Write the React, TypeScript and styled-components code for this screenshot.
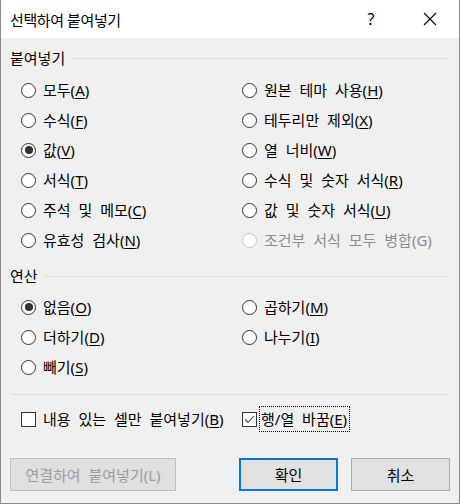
import styled, { createGlobalStyle } from "styled-components"

const GlobalStyle = createGlobalStyle`
  html, body {
    margin: 0;
    padding: 0;
    background: #f0f0f0;
  }
  * {
    box-sizing: border-box;
  }
`

type Item = {
  label: string
  key: string
  checked?: boolean
  disabled?: boolean
}

const pasteItems: Item[] = [
  { label: "모두", key: "A" },
  { label: "원본 테마 사용", key: "H" },
  { label: "수식", key: "F" },
  { label: "테두리만 제외", key: "X" },
  { label: "값", key: "V", checked: true },
  { label: "열 너비", key: "W" },
  { label: "서식", key: "T" },
  { label: "수식 및 숫자 서식", key: "R" },
  { label: "주석 및 메모", key: "C" },
  { label: "값 및 숫자 서식", key: "U" },
  { label: "유효성 검사", key: "N" },
  { label: "조건부 서식 모두 병합", key: "G", disabled: true },
]

const opItems: Item[] = [
  { label: "없음", key: "O", checked: true },
  { label: "곱하기", key: "M" },
  { label: "더하기", key: "D" },
  { label: "나누기", key: "I" },
  { label: "빼기", key: "S" },
]

const Label = ({ item }: { item: Item }) => (
  <LabelText $disabled={item.disabled}>
    {item.label}(
    {item.disabled ? item.key : <u>{item.key}</u>})
  </LabelText>
)

const App = () => {
  return (
    <>
      <GlobalStyle />
      <Dialog>
        <TitleBar>
          <Title>선택하여 붙여넣기</Title>
          <TitleButtons>
            <HelpMark>?</HelpMark>
            <CloseIcon width="14" height="14" viewBox="0 0 14 14">
              <path d="M1 1 L13 13 M13 1 L1 13" stroke="#000" strokeWidth="1.1" fill="none" />
            </CloseIcon>
          </TitleButtons>
        </TitleBar>
        <Body>
          <GroupHeader>
            <span>붙여넣기</span>
            <Rule />
          </GroupHeader>
          <OptionGrid>
            {pasteItems.map((it) => (
              <Option key={it.key}>
                <Radio $checked={it.checked} $disabled={it.disabled} />
                <Label item={it} />
              </Option>
            ))}
          </OptionGrid>

          <GroupHeader $gap={11}>
            <span>연산</span>
            <Rule />
          </GroupHeader>
          <OptionGrid $top={6}>
            {opItems.map((it) => (
              <Option key={it.key}>
                <Radio $checked={it.checked} />
                <Label item={it} />
              </Option>
            ))}
          </OptionGrid>

          <Separator />

          <CheckRow>
            <Option>
              <CheckBox />
              <Label item={{ label: "내용 있는 셀만 붙여넣기", key: "B" }} />
            </Option>
            <Option>
              <CheckBox>
                <svg width="13" height="13" viewBox="0 0 13 13">
                  <path d="M2 6.5 L5 9.5 L11 3" stroke="#444" strokeWidth="1.1" fill="none" />
                </svg>
              </CheckBox>
              <FocusBox>
                <Label item={{ label: "행/열 바꿈", key: "E" }} />
              </FocusBox>
            </Option>
          </CheckRow>

          <ButtonRow>
            <Button $variant="disabled" $width={166}>연결하여 붙여넣기(L)</Button>
            <Spacer />
            <Button $variant="default" $width={99}>확인</Button>
            <Button $variant="normal" $width={99}>취소</Button>
          </ButtonRow>
        </Body>
      </Dialog>
    </>
  )
}

const Dialog = styled.div`
  width: 460px;
  height: 504px;
  overflow: hidden;
  display: flex;
  flex-direction: column;
  background: #f0f0f0;
  border-left: 1px solid #8c8c8c;
  border-right: 1px solid #8c8c8c;
  border-bottom: 1px solid #8c8c8c;
  font-family: "Noto Sans", "Noto Sans CJK KR", sans-serif;
  font-size: 15px;
  color: #000;
`

const TitleBar = styled.div`
  height: 38px;
  flex-shrink: 0;
  background: #fff;
  display: flex;
  align-items: center;
  padding-left: 9px;
`

const Title = styled.div`
  flex: 1;
  font-size: 15px;
  line-height: 20px;
  letter-spacing: -0.4px;
  padding-top: 2px;
`

const TitleButtons = styled.div`
  display: flex;
  align-items: center;
`

const HelpMark = styled.span`
  width: 20px;
  text-align: center;
  font-size: 16px;
  margin-right: 42px;
`

const CloseIcon = styled.svg`
  margin-right: 22px;
`

const Body = styled.div`
  flex: 1;
  padding: 10px 9px 0 9px;
  display: flex;
  flex-direction: column;
`

const GroupHeader = styled.div<{ $gap?: number }>`
  display: flex;
  align-items: center;
  height: 20px;
  flex-shrink: 0;
  margin-top: ${(p) => p.$gap ?? 0}px;
  padding-right: 1px;
  span {
    line-height: 20px;
  }
`

const Rule = styled.div`
  flex: 1;
  height: 1px;
  background: #dcdcdc;
  margin-left: 7px;
`

const OptionGrid = styled.div<{ $top?: number }>`
  display: grid;
  grid-template-columns: 221px 1fr;
  grid-auto-rows: 30px;
  margin: ${(p) => p.$top ?? 7}px 0 0 11px;
`

const Option = styled.div`
  display: flex;
  align-items: center;
  gap: 7px;
`

const Radio = styled.span<{ $checked?: boolean; $disabled?: boolean }>`
  width: 15px;
  height: 15px;
  border-radius: 50%;
  border: 1px solid ${(p) => (p.$disabled ? "#c6c6c6" : "#333")};
  background: #fff;
  display: flex;
  align-items: center;
  justify-content: center;
  flex-shrink: 0;
  &::after {
    content: "";
    width: 8px;
    height: 8px;
    border-radius: 50%;
    background: #333;
    display: ${(p) => (p.$checked ? "block" : "none")};
  }
`

const LabelText = styled.span<{ $disabled?: boolean }>`
  line-height: 20px;
  white-space: nowrap;
  word-spacing: 4px;
  color: ${(p) => (p.$disabled ? "#8d8d8d" : "#000")};
  u {
    text-underline-offset: 2px;
  }
`

const Separator = styled.div`
  height: 1px;
  flex-shrink: 0;
  background: #dcdcdc;
  margin: 12px 1px 0 1px;
`

const CheckRow = styled.div`
  display: grid;
  grid-template-columns: 221px 1fr;
  height: 24px;
  margin: 12px 0 0 11px;
`

const CheckBox = styled.span`
  width: 15px;
  height: 15px;
  border: 1px solid #333;
  background: #fff;
  display: flex;
  align-items: center;
  justify-content: center;
  flex-shrink: 0;
`

const FocusBox = styled.span`
  display: flex;
  align-items: center;
  height: 24px;
  padding: 0 2px 0 1px;
  margin-left: -4px;
  outline: 1px dotted #000;
`

const ButtonRow = styled.div`
  display: flex;
  margin-top: 27px;
  gap: 13px;
`

const Spacer = styled.div`
  flex: 1;
`

type Variant = "disabled" | "default" | "normal"

const Button = styled.div<{ $variant: Variant; $width: number }>`
  width: ${(p) => p.$width}px;
  height: 33px;
  display: flex;
  align-items: center;
  justify-content: center;
  word-spacing: 4px;
  background: ${(p) => (p.$variant === "disabled" ? "#dfdfdf" : "#e1e1e1")};
  border: ${(p) =>
    p.$variant === "default"
      ? "2px solid #0078d7"
      : p.$variant === "disabled"
      ? "1px solid #bfbfbf"
      : "1px solid #adadad"};
  color: ${(p) => (p.$variant === "disabled" ? "#9d9d9d" : "#000")};
  white-space: nowrap;
`

export default App
